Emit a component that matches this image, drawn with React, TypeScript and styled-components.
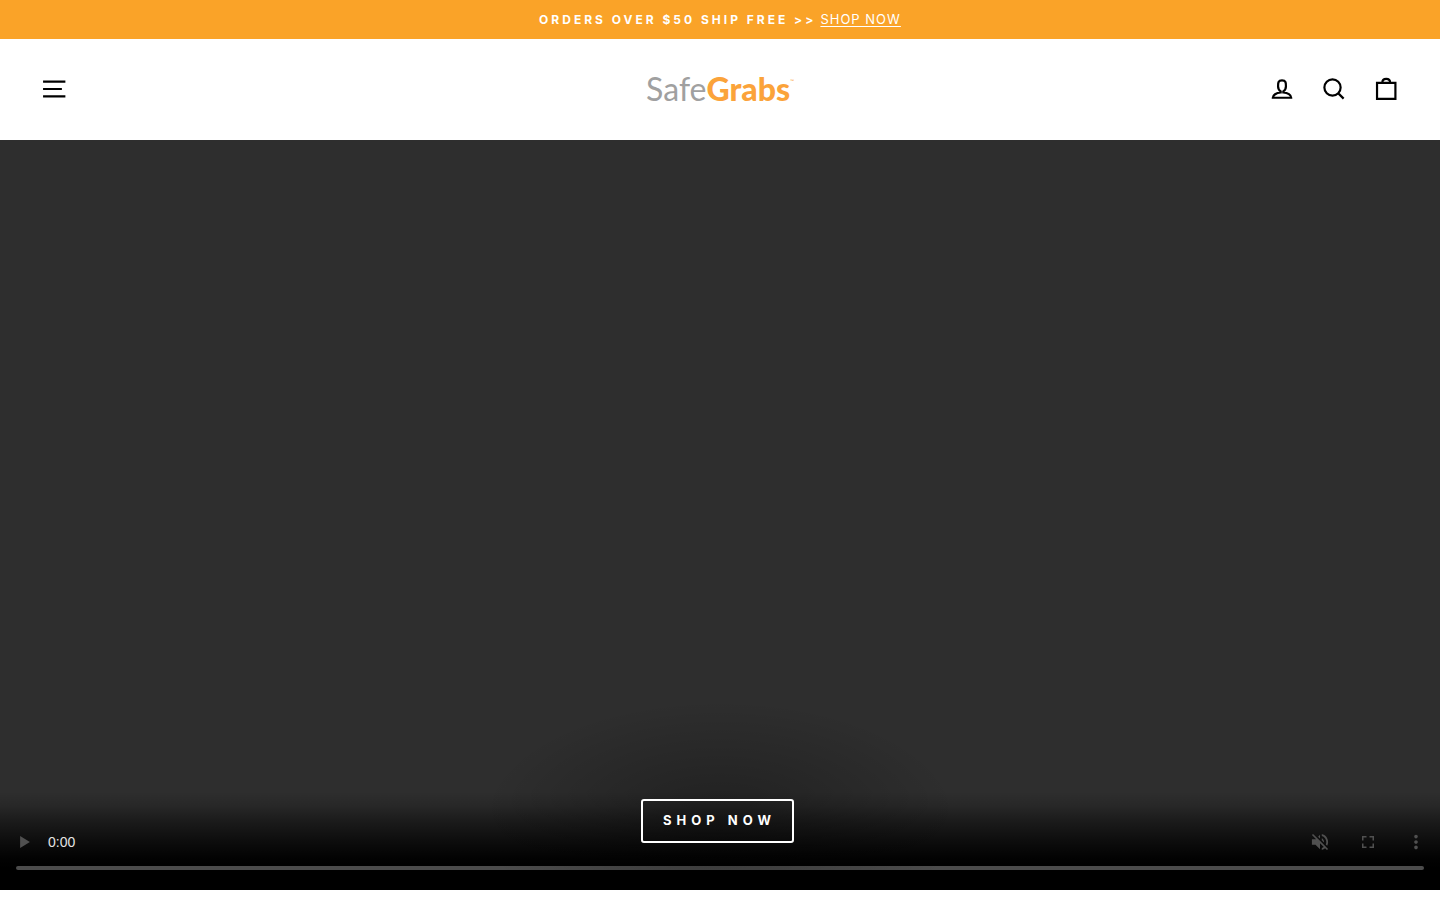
import React from "react";
import styled, { createGlobalStyle } from "styled-components";

const GlobalStyle = createGlobalStyle`
  *, *::before, *::after { box-sizing: border-box; }
  body {
    margin: 0;
    background: #fff;
    color: #000;
    font-family: Inter, "Liberation Sans", sans-serif;
  }
`;

const Announcement = styled.div`
  display: flex;
  justify-content: center;
  align-items: baseline;
  gap: 4px;
  height: 39px;
  line-height: 38px;
  background: #faa328;
  color: #fff;
`;

const AnnouncementText = styled.span`
  font-size: 12px;
  font-weight: 700;
  letter-spacing: 3px;
`;

const AnnouncementLink = styled.a`
  color: inherit;
  font-size: 13px;
  letter-spacing: 1px;
  text-underline-offset: 2px;
`;

const Header = styled.header`
  display: grid;
  grid-template-columns: 1fr auto 1fr;
  align-items: center;
  height: 101px;
  padding: 0 40px 2px;
`;

const HeaderActions = styled.nav`
  display: flex;
  justify-content: flex-end;
  gap: 24px;
`;

const IconButton = styled.button`
  display: flex;
  width: 28px;
  height: 28px;
  padding: 0;
  border: 0;
  background: none;
  color: #000;
  cursor: pointer;
`;

const LineIcon = styled.svg`
  width: 28px;
  height: 28px;
  fill: none;
  stroke: currentColor;
  stroke-width: 5;
`;

const Logo = styled.a`
  display: flex;
  color: #a0a0a0;
  font-family: Lato, "Liberation Sans", sans-serif;
  font-size: 32px;
  font-weight: 400;
  line-height: 40px;
  text-decoration: none;
`;

const LogoAccent = styled.strong`
  color: #fba33a;
  font-weight: 900;
`;

const LogoMark = styled.span`
  color: #fba33a;
  font-size: 5px;
  line-height: 24px;
`;

const Hero = styled.section`
  position: relative;
  display: flex;
  flex-direction: column;
  justify-content: flex-end;
  height: calc(100vh - 150px);
  min-height: 320px;
  margin-bottom: 10px;
  overflow: hidden;
  background: #2e2e2e;
`;

const PlayerPanel = styled.div`
  display: flex;
  flex-direction: column;
  justify-content: flex-end;
  height: 98px;
  padding: 0 16px 20px;
  background: linear-gradient(
    to bottom,
    transparent 0,
    rgba(0, 0, 0, 0.15) 14px,
    rgba(0, 0, 0, 0.4) 28px,
    rgba(0, 0, 0, 0.7) 48px,
    rgba(0, 0, 0, 0.95) 66px,
    #000 76px
  );
`;

const PlayerRow = styled.div`
  display: flex;
  align-items: center;
  height: 48px;
`;

const PlayerButton = styled.button`
  display: flex;
  width: 18px;
  height: 18px;
  padding: 0;
  border: 0;
  background: none;
  color: #505050;
`;

const PlayerIcon = styled.svg`
  width: 18px;
  height: 18px;
  fill: currentColor;
`;

const PlayerTime = styled.span`
  flex: 1;
  margin-left: 14px;
  color: #e4e4e4;
  font-family: "Liberation Sans", Arial, sans-serif;
  font-size: 14px;
`;

const PlayerTools = styled.div`
  display: flex;
  gap: 30px;
  margin-right: -1px;
`;

const Timeline = styled.input`
  appearance: none;
  display: block;
  width: 100%;
  height: 4px;
  margin: 0;
  border-radius: 2px;
  background: #4c4c4c;

  &::-webkit-slider-thumb {
    appearance: none;
    width: 0;
    height: 0;
  }
`;

const HeroContent = styled.div`
  position: absolute;
  inset: auto 0 0;
  display: flex;
  justify-content: center;
  height: 200px;
  padding: 109px 5px 0 0;
  background: radial-gradient(ellipse 240px 120px at 50% 130px, rgba(0, 0, 0, 0.3), transparent);
  pointer-events: none;
`;

const HeroLink = styled.a`
  display: flex;
  align-items: center;
  height: 44px;
  padding: 0 16px 2px 20px;
  border: 2px solid #fff;
  border-radius: 3px;
  color: #fff;
  font-size: 13px;
  font-weight: 700;
  letter-spacing: 5px;
  text-decoration: none;
  pointer-events: auto;
`;

type IconProps = { d: string; viewBox?: string };

const Line = ({ d }: IconProps) => (
  <LineIcon viewBox="0 0 64 64" aria-hidden="true">
    <path d={d} />
  </LineIcon>
);

const Solid = ({ d, viewBox = "0 0 24 24" }: IconProps) => (
  <PlayerIcon viewBox={viewBox} aria-hidden="true">
    <path d={d} />
  </PlayerIcon>
);

const headerActions = [
  {
    label: "Log in",
    d: "M35 39.84v-2.53c3.3-1.91 6-6.66 6-11.41 0-7.63 0-13.82-9-13.82s-9 6.19-9 13.82c0 4.75 2.7 9.51 6 11.41v2.53c-10.18.85-18 6-18 12.16h42c0-6.19-7.82-11.31-18-12.16z",
  },
  {
    label: "Search",
    d: "M47.16 28.58A18.58 18.58 0 1 1 28.58 10a18.58 18.58 0 0 1 18.58 18.58zM54 54L41.94 42",
  },
  {
    label: "Cart",
    d: "M11.5 18h42v36.5h-42zM23.5 18c0-5 3-9 9-9s9 4 9 9",
  },
];

const playerTools = [
  {
    label: "Unmute",
    viewBox: "2 2 20 20",
    d: "M16.5 12c0-1.77-1.02-3.29-2.5-4.03v2.21l2.45 2.45c.03-.2.05-.41.05-.63zm2.5 0c0 .94-.2 1.82-.54 2.64l1.51 1.51C20.63 14.91 21 13.5 21 12c0-4.28-2.99-7.86-7-8.77v2.06c2.89.86 5 3.54 5 6.71zM4.27 3L3 4.27 7.73 9H3v6h4l5 5v-6.73l4.25 4.25c-.67.52-1.42.93-2.25 1.18v2.06c1.38-.31 2.63-.95 3.69-1.81L19.73 21 21 19.73l-9-9L4.27 3zM12 4L9.91 6.09 12 8.18V4z",
  },
  {
    label: "Full screen",
    viewBox: "0 0 24 24",
    d: "M6 14H4v6h6v-2H6v-4zm-2-4h2V6h4V4H4v6zm14 8h-4v2h6v-6h-2v4zM14 4v2h4v4h2V4h-6z",
  },
  {
    label: "More options",
    viewBox: "2 2 20 20",
    d: "M12 8c1.1 0 2-.9 2-2s-.9-2-2-2-2 .9-2 2 .9 2 2 2zm0 2c-1.1 0-2 .9-2 2s.9 2 2 2 2-.9 2-2-.9-2-2-2zm0 6c-1.1 0-2 .9-2 2s.9 2 2 2 2-.9 2-2-.9-2-2-2z",
  },
];

export default function App() {
  return (
    <>
      <GlobalStyle />
      <Announcement>
        <AnnouncementText>ORDERS OVER $50 SHIP FREE &gt;&gt;</AnnouncementText>
        <AnnouncementLink href="#shop">SHOP NOW</AnnouncementLink>
      </Announcement>
      <Header>
        <IconButton type="button" aria-label="Site navigation">
          <Line d="M7 15h51M7 32h43M7 49h51" />
        </IconButton>
        <Logo href="#home">
          Safe<LogoAccent>Grabs</LogoAccent>
          <LogoMark>™</LogoMark>
        </Logo>
        <HeaderActions aria-label="Account and cart">
          {headerActions.map(({ label, d }) => (
            <IconButton key={label} type="button" aria-label={label}>
              <Line d={d} />
            </IconButton>
          ))}
        </HeaderActions>
      </Header>
      <main>
        <Hero>
          <PlayerPanel>
            <PlayerRow>
              <PlayerButton type="button" aria-label="Play" disabled>
                <Solid d="M5.5 4v16l13-8z" />
              </PlayerButton>
              <PlayerTime>0:00</PlayerTime>
              <PlayerTools>
                {playerTools.map(({ label, d, viewBox }) => (
                  <PlayerButton key={label} type="button" aria-label={label} disabled>
                    <Solid d={d} viewBox={viewBox} />
                  </PlayerButton>
                ))}
              </PlayerTools>
            </PlayerRow>
            <Timeline type="range" min={0} max={100} defaultValue={0} aria-label="Video time" disabled />
          </PlayerPanel>
          <HeroContent>
            <HeroLink href="#shop">SHOP NOW</HeroLink>
          </HeroContent>
        </Hero>
      </main>
    </>
  );
}
